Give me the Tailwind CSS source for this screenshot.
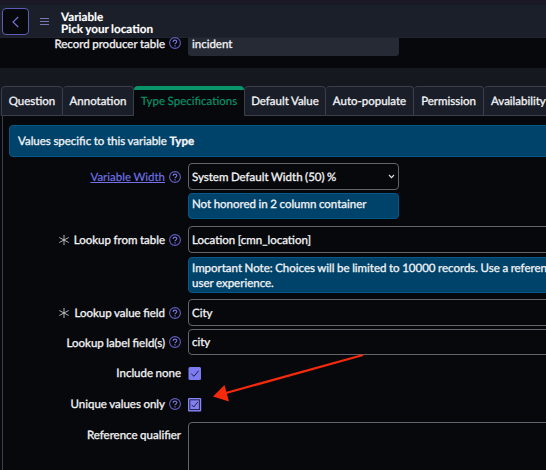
<!DOCTYPE html>
<html lang="en">
<head>
<meta charset="utf-8">
<title>Variable - Pick your location</title>
<script src="https://cdn.jsdelivr.net/npm/@tailwindcss/browser@4"></script>
</head>
<body class="w-[546px] h-[470px] overflow-hidden bg-[#07080c] text-[#f3f4f6] font-['Lato',sans-serif] font-normal text-[11.5px] leading-[15px] [word-spacing:-0.4px] [-webkit-text-stroke:0.3px] [text-rendering:geometricPrecision]">
<svg class="hidden">
  <symbol id="help" viewBox="0 0 12 12"><circle cx="6" cy="6" r="5.4" fill="none" stroke="#615fc2" stroke-width="1.1"/><path d="M4.1 4.9C4.1 2.4 7.9 2.5 7.8 4.8C7.7 6 6 5.9 6 7.3M6 8.2V9.4" fill="none" stroke="#7674dd" stroke-width="1.15"/></symbol>
  <symbol id="star" viewBox="0 0 12 12"><path d="M6 1V11M1.3 3.5L10.7 8.5M1.3 8.5L10.7 3.5" fill="none" stroke="#c3c5ca" stroke-width="0.9"/></symbol>
</svg>
<div class="relative w-[546px] h-[470px] overflow-hidden flex flex-col">
  <div class="h-[5px] shrink-0 bg-[#1c1926]"></div>
  <header class="h-[33px] shrink-0 bg-[#1b1f29] flex items-start pl-[2px] border-b border-[#20242e]">
    <button class="mt-[3px] w-[27px] h-[27px] shrink-0 rounded-[4px] border border-[#5e5cb4] bg-[#07080c] flex items-center justify-center"><svg class="w-[8px] h-[12px]" viewBox="0 0 8 12"><path d="M6.2 1L1 6L6.2 11" fill="none" stroke="#7775d8" stroke-width="1.1"/></svg></button>
    <svg class="mt-[12px] ml-[11px] w-[9px] h-[9px] shrink-0" viewBox="0 0 9 9"><path d="M0 1.5H9M0 4.5H9M0 7.5H9" stroke="#7876b4" stroke-width="1"/></svg>
    <div class="ml-[12px] mt-[6px] text-[11.7px] leading-[12px] font-bold text-white whitespace-nowrap [-webkit-text-stroke:0.15px]"><div>Variable</div><div>Pick your location</div></div>
  </header>
  <div class="h-[30px] shrink-0 flex">
    <div class="w-[181px] shrink-0 flex justify-end gap-[4px]"><span class="leading-[14px]">Record producer table</span><svg class="w-[12px] h-[12px] -mt-px"><use href="#help"/></svg></div>
    <div class="ml-[7px] w-[211px] h-[18px] rounded-b-[3px] bg-[#262a34] pl-[4px] leading-[14px]">incident</div>
  </div>
  <div class="h-[18px] shrink-0 bg-[#16181f]"></div>
  <nav class="h-[30px] shrink-0 flex pl-[1px] bg-[#16181f] whitespace-nowrap leading-[29px] text-center">
    <div class="w-[62px] shrink-0 bg-[#1a1e29] border border-[#3b3f4b] rounded-t-[4px]">Question</div>
    <div class="w-[71px] shrink-0 bg-[#1a1e29] border border-l-0 border-[#3b3f4b] rounded-t-[4px]">Annotation</div>
    <div class="w-[110px] shrink-0 bg-[#07080c] border-t-4 border-[#089569] rounded-t-[4px] text-[#089569] leading-[23px] [-webkit-text-stroke:0.15px]">Type Specifications</div>
    <div class="w-[82px] shrink-0 bg-[#1a1e29] border border-[#3b3f4b] rounded-t-[4px]">Default Value</div>
    <div class="w-[88px] shrink-0 bg-[#1a1e29] border border-l-0 border-[#3b3f4b] rounded-t-[4px]">Auto-populate</div>
    <div class="w-[70px] shrink-0 bg-[#1a1e29] border border-l-0 border-[#3b3f4b] rounded-t-[4px]">Permission</div>
    <div class="w-[80px] shrink-0 bg-[#1a1e29] border border-l-0 border-[#3b3f4b] rounded-t-[4px] text-left pl-[7px]">Availability</div>
  </nav>
  <main class="ml-[2px] w-[544px] flex-1 border-l border-[#3b3f4b] pt-[9px]">
    <div class="ml-[6px] w-[545px] h-[32px] rounded-l-[4px] border border-[#07588a] bg-[#00436a] pl-[8px] leading-[31px]">Values specific to this variable <b>Type</b></div>
    <div class="mt-[6px] flex h-[27px]">
      <div class="w-[178px] shrink-0 flex justify-end items-center gap-[4px]"><a class="underline text-[#7072e5] pt-[2px] [-webkit-text-stroke:0.15px]">Variable Width</a><svg class="w-[12px] h-[12px]"><use href="#help"/></svg></div>
      <div class="ml-[7px] w-[211px] rounded-[4px] border border-[#62656e] pl-[3px] pr-[3px] flex items-center justify-between"><span class="pt-px">System Default Width (50) %</span><svg class="w-[7px] h-[5px]" viewBox="0 0 7 5"><path d="M1 1L3.5 3.6L6 1" fill="none" stroke="#e5e7eb" stroke-width="1.1"/></svg></div>
    </div>
    <div class="mt-[3px] ml-[185px] w-[211px] h-[26px] rounded-[4px] border border-[#07588a] bg-[#00436a] pl-[3px] leading-[21px]">Not honored in 2 column container</div>
    <div class="mt-[7px] flex h-[27px]">
      <div class="w-[178px] shrink-0 flex justify-end items-center gap-[4px]"><svg class="w-[12px] h-[12px]"><use href="#star"/></svg><span class="pt-[2px]">Lookup from table</span><svg class="w-[12px] h-[12px]"><use href="#help"/></svg></div>
      <div class="ml-[7px] w-[370px] shrink-0 rounded-[4px] border border-[#62656e] pl-[3px] pt-[2px] flex items-center">Location [cmn_location]</div>
    </div>
    <div class="mt-[4px] ml-[185px] w-[370px] h-[36px] rounded-[4px] border border-[#07588a] bg-[#00436a] pl-[3px] pt-[3px] leading-[15px] whitespace-nowrap">Important Note: Choices will be limited to 10000 records. Use a reference<br>user experience.</div>
    <div class="mt-[6px] flex h-[27px]">
      <div class="w-[178px] shrink-0 flex justify-end items-center gap-[4px]"><svg class="w-[12px] h-[12px]"><use href="#star"/></svg><span class="pt-[2px]">Lookup value field</span><svg class="w-[12px] h-[12px]"><use href="#help"/></svg></div>
      <div class="ml-[7px] w-[370px] shrink-0 rounded-[4px] border border-[#62656e] pl-[3px] pt-[2px] flex items-center">City</div>
    </div>
    <div class="mt-[3px] flex h-[26px]">
      <div class="w-[178px] shrink-0 flex justify-end items-center gap-[4px]"><span class="pt-[2px]">Lookup label field(s)</span><svg class="w-[12px] h-[12px]"><use href="#help"/></svg></div>
      <div class="ml-[7px] w-[370px] shrink-0 rounded-[4px] border border-[#62656e] pl-[3px] pt-px flex items-center">city</div>
    </div>
    <div class="mt-[12px] flex h-[13px] items-center">
      <div class="w-[178px] shrink-0 text-right">Include none</div>
      <svg class="ml-[7px] w-[14px] h-[13px]" viewBox="0 0 14 13"><rect x=".5" width="12.5" height="13" rx="1.5" fill="#7c7cf0"/><path d="M3.3 6.8L6 9.3L10.5 3.8" fill="none" stroke="#1c1c40" stroke-width="1"/></svg>
    </div>
    <div class="mt-[17px] flex h-[15px] items-center">
      <div class="w-[178px] shrink-0 flex justify-end items-center gap-[4px]"><span>Unique values only</span><svg class="w-[12px] h-[12px] -mt-px"><use href="#help"/></svg></div>
      <svg class="ml-[6px] w-[15px] h-[15px]" viewBox="0 0 15 15"><rect x="1" y="1" width="13.2" height="13.5" rx="1" fill="#8786fa"/><rect x="2.8" y="2.8" width="9.6" height="9.8" fill="#8280ed" stroke="#20204b" stroke-width="1"/><path d="M4.6 7.8L6.8 10L10.8 5" fill="none" stroke="#20204b" stroke-width="1"/></svg>
    </div>
    <div class="mt-[10px] flex h-[60px]">
      <div class="w-[178px] shrink-0 text-right pt-[6px]">Reference qualifier</div>
      <div class="ml-[7px] w-[370px] shrink-0 rounded-[4px] border border-[#62656e]"></div>
    </div>
  </main>
  <svg class="absolute left-[200px] top-[340px] w-[180px] h-[80px]" viewBox="0 0 180 80"><path d="M163 15L26 53" stroke="#f52a0c" stroke-width="2.3"/><path d="M13 56.5L24.5 45L29 61.5Z" fill="#f52a0c"/></svg>
</div>
</body>
</html>
